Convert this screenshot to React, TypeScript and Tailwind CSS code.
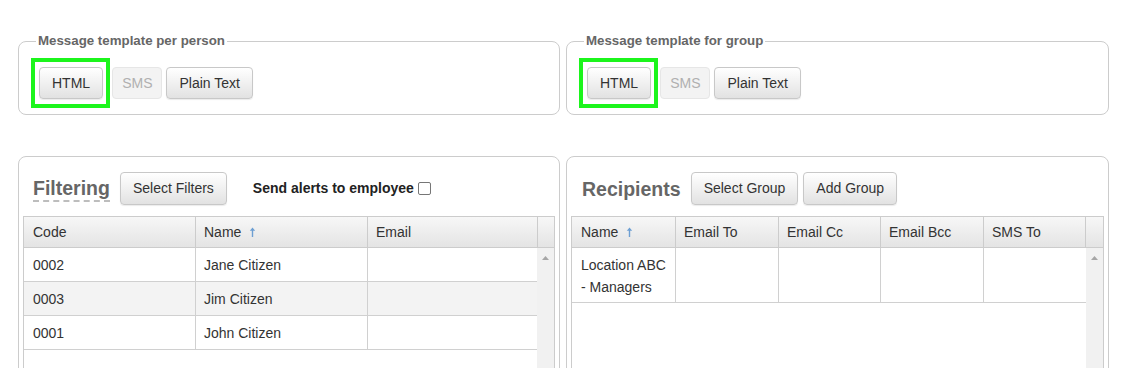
import React from "react";

function Btn({
  children,
  disabled,
  highlight,
  className = "",
}: {
  children: React.ReactNode;
  disabled?: boolean;
  highlight?: boolean;
  className?: string;
}) {
  if (disabled) {
    return (
      <span
        className={`relative flex h-[32px] items-center rounded-[4px] border border-[#e6e6e6] bg-[#f3f3f3] px-[9px] text-[14px] text-[#b0b0b0] ${className}`}
      >
        {children}
      </span>
    );
  }
  return (
    <span
      className={`relative flex h-[32px] items-center rounded-[4px] border border-[#c8c8c8] bg-linear-to-b from-white to-[#e2e2e2] px-[12px] text-[14px] text-[#333] shadow-[0_1px_1px_rgba(0,0,0,0.08)] ${className}`}
    >
      {children}
      {highlight && (
        <span className="pointer-events-none absolute -top-[10px] -bottom-[10px] -left-[9px] -right-[8px] border-4 border-[#1cf51c]" />
      )}
    </span>
  );
}

function TemplateBox({ title }: { title: string }) {
  return (
    <fieldset className="rounded-[8px] border border-[#cccccc] px-[20px] pt-[18px] pb-[15px]">
      <legend className="-ml-[3px] px-[2px] text-[13.3px] leading-[16px] font-bold text-[#666]">
        {title}
      </legend>
      <div className="flex items-center">
        <Btn highlight className="mr-[9px]">
          HTML
        </Btn>
        <Btn disabled className="mr-[4px]">
          SMS
        </Btn>
        <Btn>Plain Text</Btn>
      </div>
    </fieldset>
  );
}

function SortArrow() {
  return (
    <svg width="7" height="10" viewBox="0 0 7 10" className="ml-[8px]">
      <path d="M3.5 0.5 L0.8 3.8 H2.8 V10 H4.2 V3.8 H6.2 Z" fill="#6d9fd3" />
    </svg>
  );
}

function ScrollBar() {
  return (
    <div className="w-[17px] shrink-0 bg-[#f1f1f1] pt-[7px]">
      <svg width="17" height="6" viewBox="0 0 17 6">
        <path d="M5 5 L8.5 1 L12 5 Z" fill="#a6a6a6" />
      </svg>
    </div>
  );
}

type Col = { label: string; width: number; sort?: boolean };

function Table({ cols, rows, rowHeight }: { cols: Col[]; rows: React.ReactNode[][]; rowHeight: string }) {
  return (
    <div className="border border-[#cccccc]">
      <div className="flex h-[31px] border-b border-[#cccccc] bg-linear-to-b from-[#f7f7f7] to-[#e4e4e4]">
        {cols.map((c, i) => (
          <div
            key={c.label}
            style={{ width: c.width }}
            className={`flex shrink-0 items-center ${i === 0 ? "pl-[9px]" : "border-l border-[#cccccc] pl-[8px]"}`}
          >
            {c.label}
            {c.sort && <SortArrow />}
          </div>
        ))}
        <div className="w-[17px] shrink-0 border-l border-[#cccccc]" />
      </div>
      <div className="flex h-[160px]">
        <div className="flex-1">
          {rows.map((r, ri) => (
            <div
              key={ri}
              className={`flex border-b border-[#d0d0d0] ${ri % 2 === 1 ? "bg-[#f3f3f3]" : "bg-white"}`}
            >
              {r.map((cell, ci) => (
                <div
                  key={ci}
                  style={{ width: cols[ci].width }}
                  className={`shrink-0 pt-[6px] pb-[5px] leading-[22px] ${rowHeight} ${ci === 0 ? "pl-[9px]" : "border-l border-[#d0d0d0] pl-[8px]"}`}
                >
                  {cell}
                </div>
              ))}
            </div>
          ))}
        </div>
        <ScrollBar />
      </div>
    </div>
  );
}

export default function App() {
  return (
    <div className="h-[368px] w-[1127px] overflow-hidden bg-white pt-[33px] font-['Liberation_Sans',Arial,sans-serif] text-[14px] text-[#333]">
      <div className="ml-[18px] grid w-[1091px] grid-cols-[542px_543px] gap-x-[6px]">
        <TemplateBox title="Message template per person" />
        <TemplateBox title="Message template for group" />
      </div>

      <div className="mt-[41px] ml-[18px] grid w-[1091px] grid-cols-[542px_543px] gap-x-[6px]">
        <div className="rounded-[8px] border border-[#cccccc] px-[4px] pt-[15px]">
          <div className="mb-[11px] flex h-[33px] items-center">
            <span className="ml-[10px] border-b-2 border-dashed border-[#bdbdbd] text-[19.5px] leading-[24px] font-bold text-[#666]">
              Filtering
            </span>
            <Btn className="ml-[10px] h-[33px]">Select Filters</Btn>
            <span className="ml-[26px] font-bold text-[#222]">Send alerts to employee</span>
            <span className="ml-[4px] h-[13px] w-[13px] rounded-[2px] border border-[#767676] bg-white" />
          </div>
          <Table
            cols={[
              { label: "Code", width: 171 },
              { label: "Name", width: 172, sort: true },
              { label: "Email", width: 170 },
            ]}
            rows={[
              ["0002", "Jane Citizen", ""],
              ["0003", "Jim Citizen", ""],
              ["0001", "John Citizen", ""],
            ]}
            rowHeight="h-[33px]"
          />
        </div>

        <div className="rounded-[8px] border border-[#cccccc] px-[4px] pt-[15px]">
          <div className="mb-[11px] flex h-[33px] items-center">
            <span className="ml-[11px] text-[19.5px] leading-[24px] font-bold text-[#666]">Recipients</span>
            <Btn className="ml-[10px] h-[33px]">Select Group</Btn>
            <Btn className="ml-[5px] h-[33px]">Add Group</Btn>
          </div>
          <Table
            cols={[
              { label: "Name", width: 103, sort: true },
              { label: "Email To", width: 103 },
              { label: "Email Cc", width: 102 },
              { label: "Email Bcc", width: 103 },
              { label: "SMS To", width: 102 },
            ]}
            rows={[
              [
                <>
                  Location ABC
                  <br />- Managers
                </>,
                "",
                "",
                "",
                "",
              ],
            ]}
            rowHeight="h-[54px]"
          />
        </div>
      </div>
    </div>
  );
}
